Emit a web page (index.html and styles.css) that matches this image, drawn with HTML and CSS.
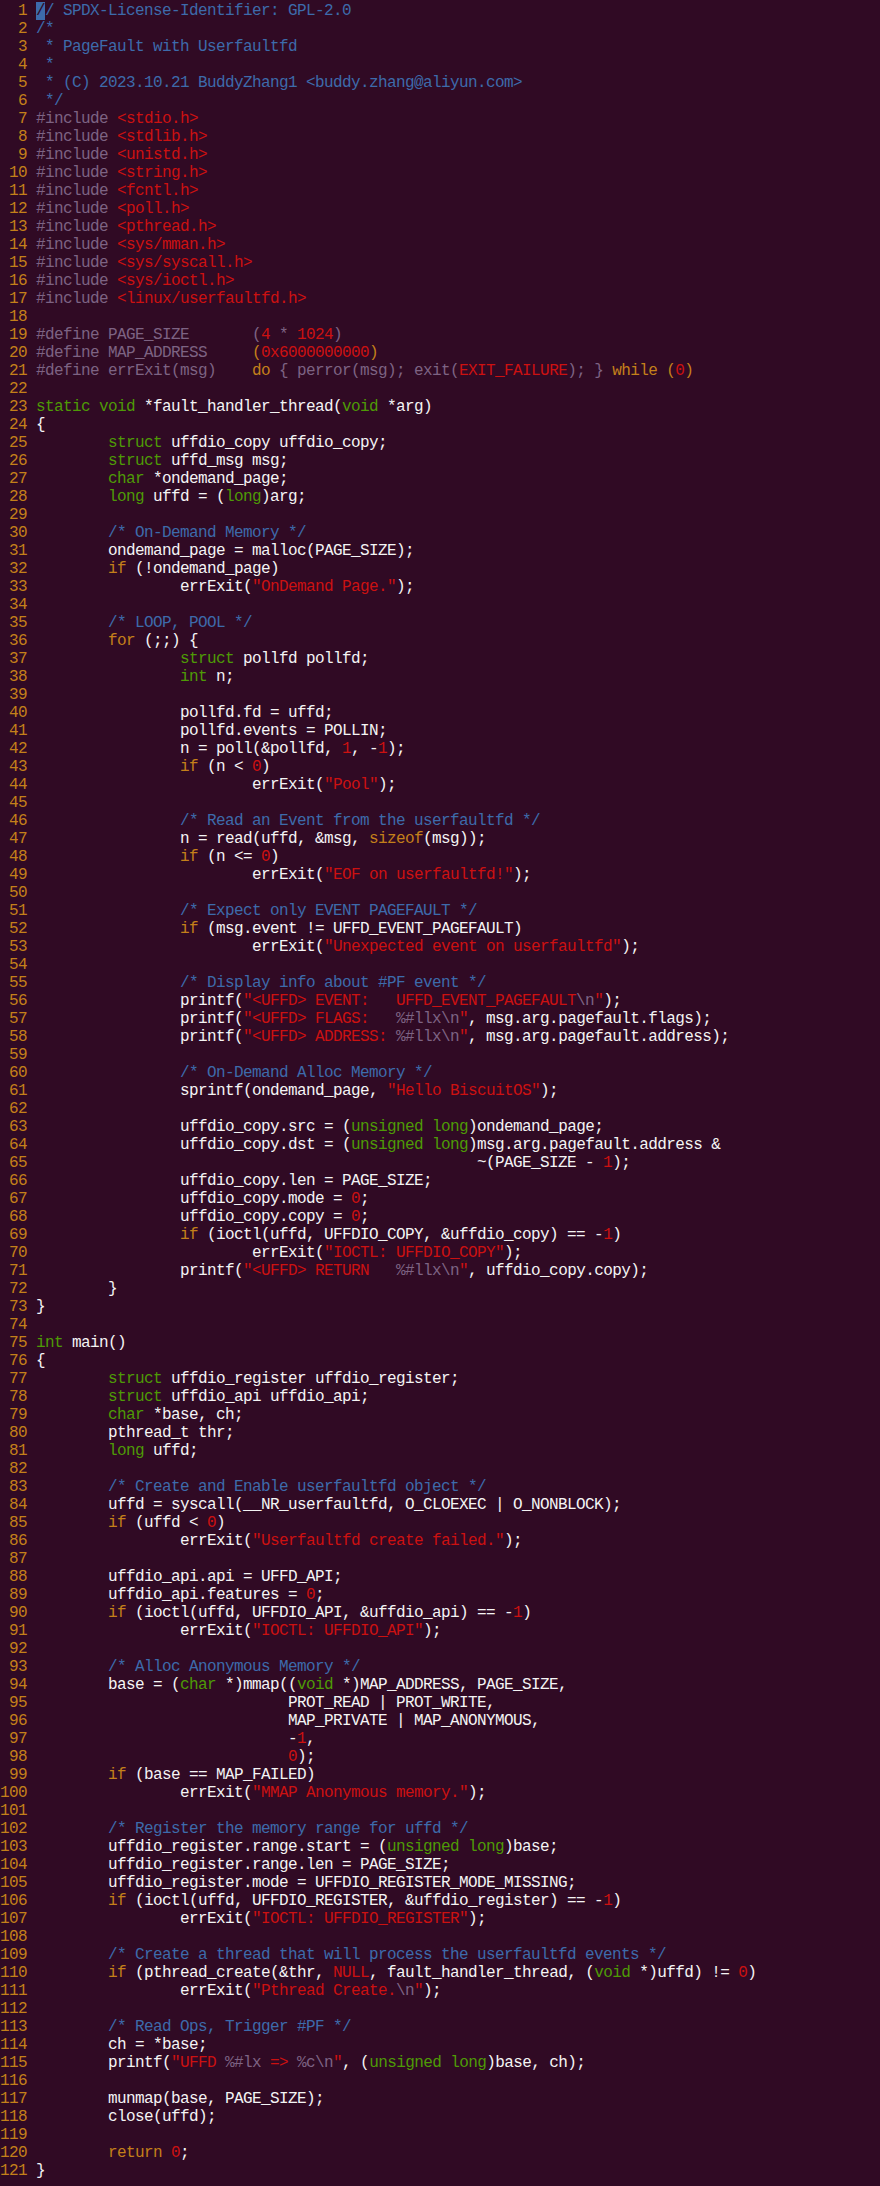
FILE: index.html
```html
<!DOCTYPE html>
<html lang="en">

<head>
    <meta charset="UTF-8">
    <meta name="viewport" content="width=device-width, initial-scale=1.0">
    <title>userfaultfd.c</title>
    <link rel="stylesheet" href="styles.css">
</head>

<body>
<div id="editor">
<div class="row"><span class="ln">1</span><span class="code"><span class="c"><span class="cur">/</span>/ SPDX-License-Identifier: GPL-2.0</span></span></div>
<div class="row"><span class="ln">2</span><span class="code"><span class="c">/*</span></span></div>
<div class="row"><span class="ln">3</span><span class="code"><span class="c"> * PageFault with Userfaultfd</span></span></div>
<div class="row"><span class="ln">4</span><span class="code"><span class="c"> *</span></span></div>
<div class="row"><span class="ln">5</span><span class="code"><span class="c"> * (C) 2023.10.21 BuddyZhang1 &lt;buddy.zhang@aliyun.com&gt;</span></span></div>
<div class="row"><span class="ln">6</span><span class="code"><span class="c"> */</span></span></div>
<div class="row"><span class="ln">7</span><span class="code"><span class="pp">#include</span> <span class="s">&lt;stdio.h&gt;</span></span></div>
<div class="row"><span class="ln">8</span><span class="code"><span class="pp">#include</span> <span class="s">&lt;stdlib.h&gt;</span></span></div>
<div class="row"><span class="ln">9</span><span class="code"><span class="pp">#include</span> <span class="s">&lt;unistd.h&gt;</span></span></div>
<div class="row"><span class="ln">10</span><span class="code"><span class="pp">#include</span> <span class="s">&lt;string.h&gt;</span></span></div>
<div class="row"><span class="ln">11</span><span class="code"><span class="pp">#include</span> <span class="s">&lt;fcntl.h&gt;</span></span></div>
<div class="row"><span class="ln">12</span><span class="code"><span class="pp">#include</span> <span class="s">&lt;poll.h&gt;</span></span></div>
<div class="row"><span class="ln">13</span><span class="code"><span class="pp">#include</span> <span class="s">&lt;pthread.h&gt;</span></span></div>
<div class="row"><span class="ln">14</span><span class="code"><span class="pp">#include</span> <span class="s">&lt;sys/mman.h&gt;</span></span></div>
<div class="row"><span class="ln">15</span><span class="code"><span class="pp">#include</span> <span class="s">&lt;sys/syscall.h&gt;</span></span></div>
<div class="row"><span class="ln">16</span><span class="code"><span class="pp">#include</span> <span class="s">&lt;sys/ioctl.h&gt;</span></span></div>
<div class="row"><span class="ln">17</span><span class="code"><span class="pp">#include</span> <span class="s">&lt;linux/userfaultfd.h&gt;</span></span></div>
<div class="row"><span class="ln">18</span><span class="code"></span></div>
<div class="row"><span class="ln">19</span><span class="code"><span class="pp">#define PAGE_SIZE       (</span><span class="s">4</span><span class="pp"> * </span><span class="s">1024</span><span class="pp">)</span></span></div>
<div class="row"><span class="ln">20</span><span class="code"><span class="pp">#define MAP_ADDRESS     </span><span class="k">(</span><span class="s">0x6000000000</span><span class="k">)</span></span></div>
<div class="row"><span class="ln">21</span><span class="code"><span class="pp">#define errExit(msg)    </span><span class="k">do</span><span class="pp"> { perror(msg); exit(</span><span class="s">EXIT_FAILURE</span><span class="pp">); } </span><span class="k">while</span> <span class="k">(</span><span class="s">0</span><span class="k">)</span></span></div>
<div class="row"><span class="ln">22</span><span class="code"></span></div>
<div class="row"><span class="ln">23</span><span class="code"><span class="t">static</span> <span class="t">void</span> *fault_handler_thread(<span class="t">void</span> *arg)</span></div>
<div class="row"><span class="ln">24</span><span class="code">{</span></div>
<div class="row"><span class="ln">25</span><span class="code">        <span class="t">struct</span> uffdio_copy uffdio_copy;</span></div>
<div class="row"><span class="ln">26</span><span class="code">        <span class="t">struct</span> uffd_msg msg;</span></div>
<div class="row"><span class="ln">27</span><span class="code">        <span class="t">char</span> *ondemand_page;</span></div>
<div class="row"><span class="ln">28</span><span class="code">        <span class="t">long</span> uffd = (<span class="t">long</span>)arg;</span></div>
<div class="row"><span class="ln">29</span><span class="code"></span></div>
<div class="row"><span class="ln">30</span><span class="code">        <span class="c">/* On-Demand Memory */</span></span></div>
<div class="row"><span class="ln">31</span><span class="code">        ondemand_page = malloc(PAGE_SIZE);</span></div>
<div class="row"><span class="ln">32</span><span class="code">        <span class="k">if</span> (!ondemand_page)</span></div>
<div class="row"><span class="ln">33</span><span class="code">                errExit(<span class="s">"OnDemand Page."</span>);</span></div>
<div class="row"><span class="ln">34</span><span class="code"></span></div>
<div class="row"><span class="ln">35</span><span class="code">        <span class="c">/* LOOP, POOL */</span></span></div>
<div class="row"><span class="ln">36</span><span class="code">        <span class="k">for</span> (;;) {</span></div>
<div class="row"><span class="ln">37</span><span class="code">                <span class="t">struct</span> pollfd pollfd;</span></div>
<div class="row"><span class="ln">38</span><span class="code">                <span class="t">int</span> n;</span></div>
<div class="row"><span class="ln">39</span><span class="code"></span></div>
<div class="row"><span class="ln">40</span><span class="code">                pollfd.fd = uffd;</span></div>
<div class="row"><span class="ln">41</span><span class="code">                pollfd.events = POLLIN;</span></div>
<div class="row"><span class="ln">42</span><span class="code">                n = poll(&amp;pollfd, <span class="s">1</span>, -<span class="s">1</span>);</span></div>
<div class="row"><span class="ln">43</span><span class="code">                <span class="k">if</span> (n &lt; <span class="s">0</span>)</span></div>
<div class="row"><span class="ln">44</span><span class="code">                        errExit(<span class="s">"Pool"</span>);</span></div>
<div class="row"><span class="ln">45</span><span class="code"></span></div>
<div class="row"><span class="ln">46</span><span class="code">                <span class="c">/* Read an Event from the userfaultfd */</span></span></div>
<div class="row"><span class="ln">47</span><span class="code">                n = read(uffd, &amp;msg, <span class="k">sizeof</span>(msg));</span></div>
<div class="row"><span class="ln">48</span><span class="code">                <span class="k">if</span> (n &lt;= <span class="s">0</span>)</span></div>
<div class="row"><span class="ln">49</span><span class="code">                        errExit(<span class="s">"EOF on userfaultfd!"</span>);</span></div>
<div class="row"><span class="ln">50</span><span class="code"></span></div>
<div class="row"><span class="ln">51</span><span class="code">                <span class="c">/* Expect only EVENT PAGEFAULT */</span></span></div>
<div class="row"><span class="ln">52</span><span class="code">                <span class="k">if</span> (msg.event != UFFD_EVENT_PAGEFAULT)</span></div>
<div class="row"><span class="ln">53</span><span class="code">                        errExit(<span class="s">"Unexpected event on userfaultfd"</span>);</span></div>
<div class="row"><span class="ln">54</span><span class="code"></span></div>
<div class="row"><span class="ln">55</span><span class="code">                <span class="c">/* Display info about #PF event */</span></span></div>
<div class="row"><span class="ln">56</span><span class="code">                printf(<span class="s">"&lt;UFFD&gt; EVENT:   UFFD_EVENT_PAGEFAULT<span class="x">\n</span>"</span>);</span></div>
<div class="row"><span class="ln">57</span><span class="code">                printf(<span class="s">"&lt;UFFD&gt; FLAGS:   <span class="x">%#llx\n</span>"</span>, msg.arg.pagefault.flags);</span></div>
<div class="row"><span class="ln">58</span><span class="code">                printf(<span class="s">"&lt;UFFD&gt; ADDRESS: <span class="x">%#llx\n</span>"</span>, msg.arg.pagefault.address);</span></div>
<div class="row"><span class="ln">59</span><span class="code"></span></div>
<div class="row"><span class="ln">60</span><span class="code">                <span class="c">/* On-Demand Alloc Memory */</span></span></div>
<div class="row"><span class="ln">61</span><span class="code">                sprintf(ondemand_page, <span class="s">"Hello BiscuitOS"</span>);</span></div>
<div class="row"><span class="ln">62</span><span class="code"></span></div>
<div class="row"><span class="ln">63</span><span class="code">                uffdio_copy.src = (<span class="t">unsigned</span> <span class="t">long</span>)ondemand_page;</span></div>
<div class="row"><span class="ln">64</span><span class="code">                uffdio_copy.dst = (<span class="t">unsigned</span> <span class="t">long</span>)msg.arg.pagefault.address &amp;</span></div>
<div class="row"><span class="ln">65</span><span class="code">                                                 ~(PAGE_SIZE - <span class="s">1</span>);</span></div>
<div class="row"><span class="ln">66</span><span class="code">                uffdio_copy.len = PAGE_SIZE;</span></div>
<div class="row"><span class="ln">67</span><span class="code">                uffdio_copy.mode = <span class="s">0</span>;</span></div>
<div class="row"><span class="ln">68</span><span class="code">                uffdio_copy.copy = <span class="s">0</span>;</span></div>
<div class="row"><span class="ln">69</span><span class="code">                <span class="k">if</span> (ioctl(uffd, UFFDIO_COPY, &amp;uffdio_copy) == -<span class="s">1</span>)</span></div>
<div class="row"><span class="ln">70</span><span class="code">                        errExit(<span class="s">"IOCTL: UFFDIO_COPY"</span>);</span></div>
<div class="row"><span class="ln">71</span><span class="code">                printf(<span class="s">"&lt;UFFD&gt; RETURN   <span class="x">%#llx\n</span>"</span>, uffdio_copy.copy);</span></div>
<div class="row"><span class="ln">72</span><span class="code">        }</span></div>
<div class="row"><span class="ln">73</span><span class="code">}</span></div>
<div class="row"><span class="ln">74</span><span class="code"></span></div>
<div class="row"><span class="ln">75</span><span class="code"><span class="t">int</span> main()</span></div>
<div class="row"><span class="ln">76</span><span class="code">{</span></div>
<div class="row"><span class="ln">77</span><span class="code">        <span class="t">struct</span> uffdio_register uffdio_register;</span></div>
<div class="row"><span class="ln">78</span><span class="code">        <span class="t">struct</span> uffdio_api uffdio_api;</span></div>
<div class="row"><span class="ln">79</span><span class="code">        <span class="t">char</span> *base, ch;</span></div>
<div class="row"><span class="ln">80</span><span class="code">        pthread_t thr;</span></div>
<div class="row"><span class="ln">81</span><span class="code">        <span class="t">long</span> uffd;</span></div>
<div class="row"><span class="ln">82</span><span class="code"></span></div>
<div class="row"><span class="ln">83</span><span class="code">        <span class="c">/* Create and Enable userfaultfd object */</span></span></div>
<div class="row"><span class="ln">84</span><span class="code">        uffd = syscall(__NR_userfaultfd, O_CLOEXEC | O_NONBLOCK);</span></div>
<div class="row"><span class="ln">85</span><span class="code">        <span class="k">if</span> (uffd &lt; <span class="s">0</span>)</span></div>
<div class="row"><span class="ln">86</span><span class="code">                errExit(<span class="s">"Userfaultfd create failed."</span>);</span></div>
<div class="row"><span class="ln">87</span><span class="code"></span></div>
<div class="row"><span class="ln">88</span><span class="code">        uffdio_api.api = UFFD_API;</span></div>
<div class="row"><span class="ln">89</span><span class="code">        uffdio_api.features = <span class="s">0</span>;</span></div>
<div class="row"><span class="ln">90</span><span class="code">        <span class="k">if</span> (ioctl(uffd, UFFDIO_API, &amp;uffdio_api) == -<span class="s">1</span>)</span></div>
<div class="row"><span class="ln">91</span><span class="code">                errExit(<span class="s">"IOCTL: UFFDIO_API"</span>);</span></div>
<div class="row"><span class="ln">92</span><span class="code"></span></div>
<div class="row"><span class="ln">93</span><span class="code">        <span class="c">/* Alloc Anonymous Memory */</span></span></div>
<div class="row"><span class="ln">94</span><span class="code">        base = (<span class="t">char</span> *)mmap((<span class="t">void</span> *)MAP_ADDRESS, PAGE_SIZE,</span></div>
<div class="row"><span class="ln">95</span><span class="code">                            PROT_READ | PROT_WRITE,</span></div>
<div class="row"><span class="ln">96</span><span class="code">                            MAP_PRIVATE | MAP_ANONYMOUS,</span></div>
<div class="row"><span class="ln">97</span><span class="code">                            -<span class="s">1</span>,</span></div>
<div class="row"><span class="ln">98</span><span class="code">                            <span class="s">0</span>);</span></div>
<div class="row"><span class="ln">99</span><span class="code">        <span class="k">if</span> (base == MAP_FAILED)</span></div>
<div class="row"><span class="ln">100</span><span class="code">                errExit(<span class="s">"MMAP Anonymous memory."</span>);</span></div>
<div class="row"><span class="ln">101</span><span class="code"></span></div>
<div class="row"><span class="ln">102</span><span class="code">        <span class="c">/* Register the memory range for uffd */</span></span></div>
<div class="row"><span class="ln">103</span><span class="code">        uffdio_register.range.start = (<span class="t">unsigned</span> <span class="t">long</span>)base;</span></div>
<div class="row"><span class="ln">104</span><span class="code">        uffdio_register.range.len = PAGE_SIZE;</span></div>
<div class="row"><span class="ln">105</span><span class="code">        uffdio_register.mode = UFFDIO_REGISTER_MODE_MISSING;</span></div>
<div class="row"><span class="ln">106</span><span class="code">        <span class="k">if</span> (ioctl(uffd, UFFDIO_REGISTER, &amp;uffdio_register) == -<span class="s">1</span>)</span></div>
<div class="row"><span class="ln">107</span><span class="code">                errExit(<span class="s">"IOCTL: UFFDIO_REGISTER"</span>);</span></div>
<div class="row"><span class="ln">108</span><span class="code"></span></div>
<div class="row"><span class="ln">109</span><span class="code">        <span class="c">/* Create a thread that will process the userfaultfd events */</span></span></div>
<div class="row"><span class="ln">110</span><span class="code">        <span class="k">if</span> (pthread_create(&amp;thr, <span class="s">NULL</span>, fault_handler_thread, (<span class="t">void</span> *)uffd) != <span class="s">0</span>)</span></div>
<div class="row"><span class="ln">111</span><span class="code">                errExit(<span class="s">"Pthread Create.<span class="x">\n</span>"</span>);</span></div>
<div class="row"><span class="ln">112</span><span class="code"></span></div>
<div class="row"><span class="ln">113</span><span class="code">        <span class="c">/* Read Ops, Trigger #PF */</span></span></div>
<div class="row"><span class="ln">114</span><span class="code">        ch = *base;</span></div>
<div class="row"><span class="ln">115</span><span class="code">        printf(<span class="s">"UFFD <span class="x">%#lx</span> =&gt; <span class="x">%c\n</span>"</span>, (<span class="t">unsigned</span> <span class="t">long</span>)base, ch);</span></div>
<div class="row"><span class="ln">116</span><span class="code"></span></div>
<div class="row"><span class="ln">117</span><span class="code">        munmap(base, PAGE_SIZE);</span></div>
<div class="row"><span class="ln">118</span><span class="code">        close(uffd);</span></div>
<div class="row"><span class="ln">119</span><span class="code"></span></div>
<div class="row"><span class="ln">120</span><span class="code">        <span class="k">return</span> <span class="s">0</span>;</span></div>
<div class="row"><span class="ln">121</span><span class="code">}</span></div>
</div>
</body>

</html>
```

FILE: styles.css
```css
* {
    box-sizing: border-box;
    margin: 0;
    padding: 0;
}

html,
body {
    background-color: #300a24;
}

body {
    min-height: 100vh;
}

#editor {
    padding-top: 2px;
    font-family: "Liberation Mono", "DejaVu Sans Mono", monospace;
    font-size: 16px;
    letter-spacing: -0.6px;
    line-height: 18px;
    color: #f4f4f4;
}

.row {
    display: flex;
    height: 18px;
    white-space: pre;
}

.ln {
    width: 27px;
    margin-right: 9px;
    text-align: right;
    color: #c4801a;
    flex-shrink: 0;
}

.code {
    white-space: pre;
}

/* vim syntax groups */
.c {
    color: #3d6bab;
}

.pp {
    color: #7d6383;
}

.s {
    color: #cc1111;
}

.t {
    color: #4e9a06;
}

.k {
    color: #c4801a;
}

.x {
    color: #7d6383;
}

.cur {
    background-color: #3d6bab;
    color: #300a24;
}
```
